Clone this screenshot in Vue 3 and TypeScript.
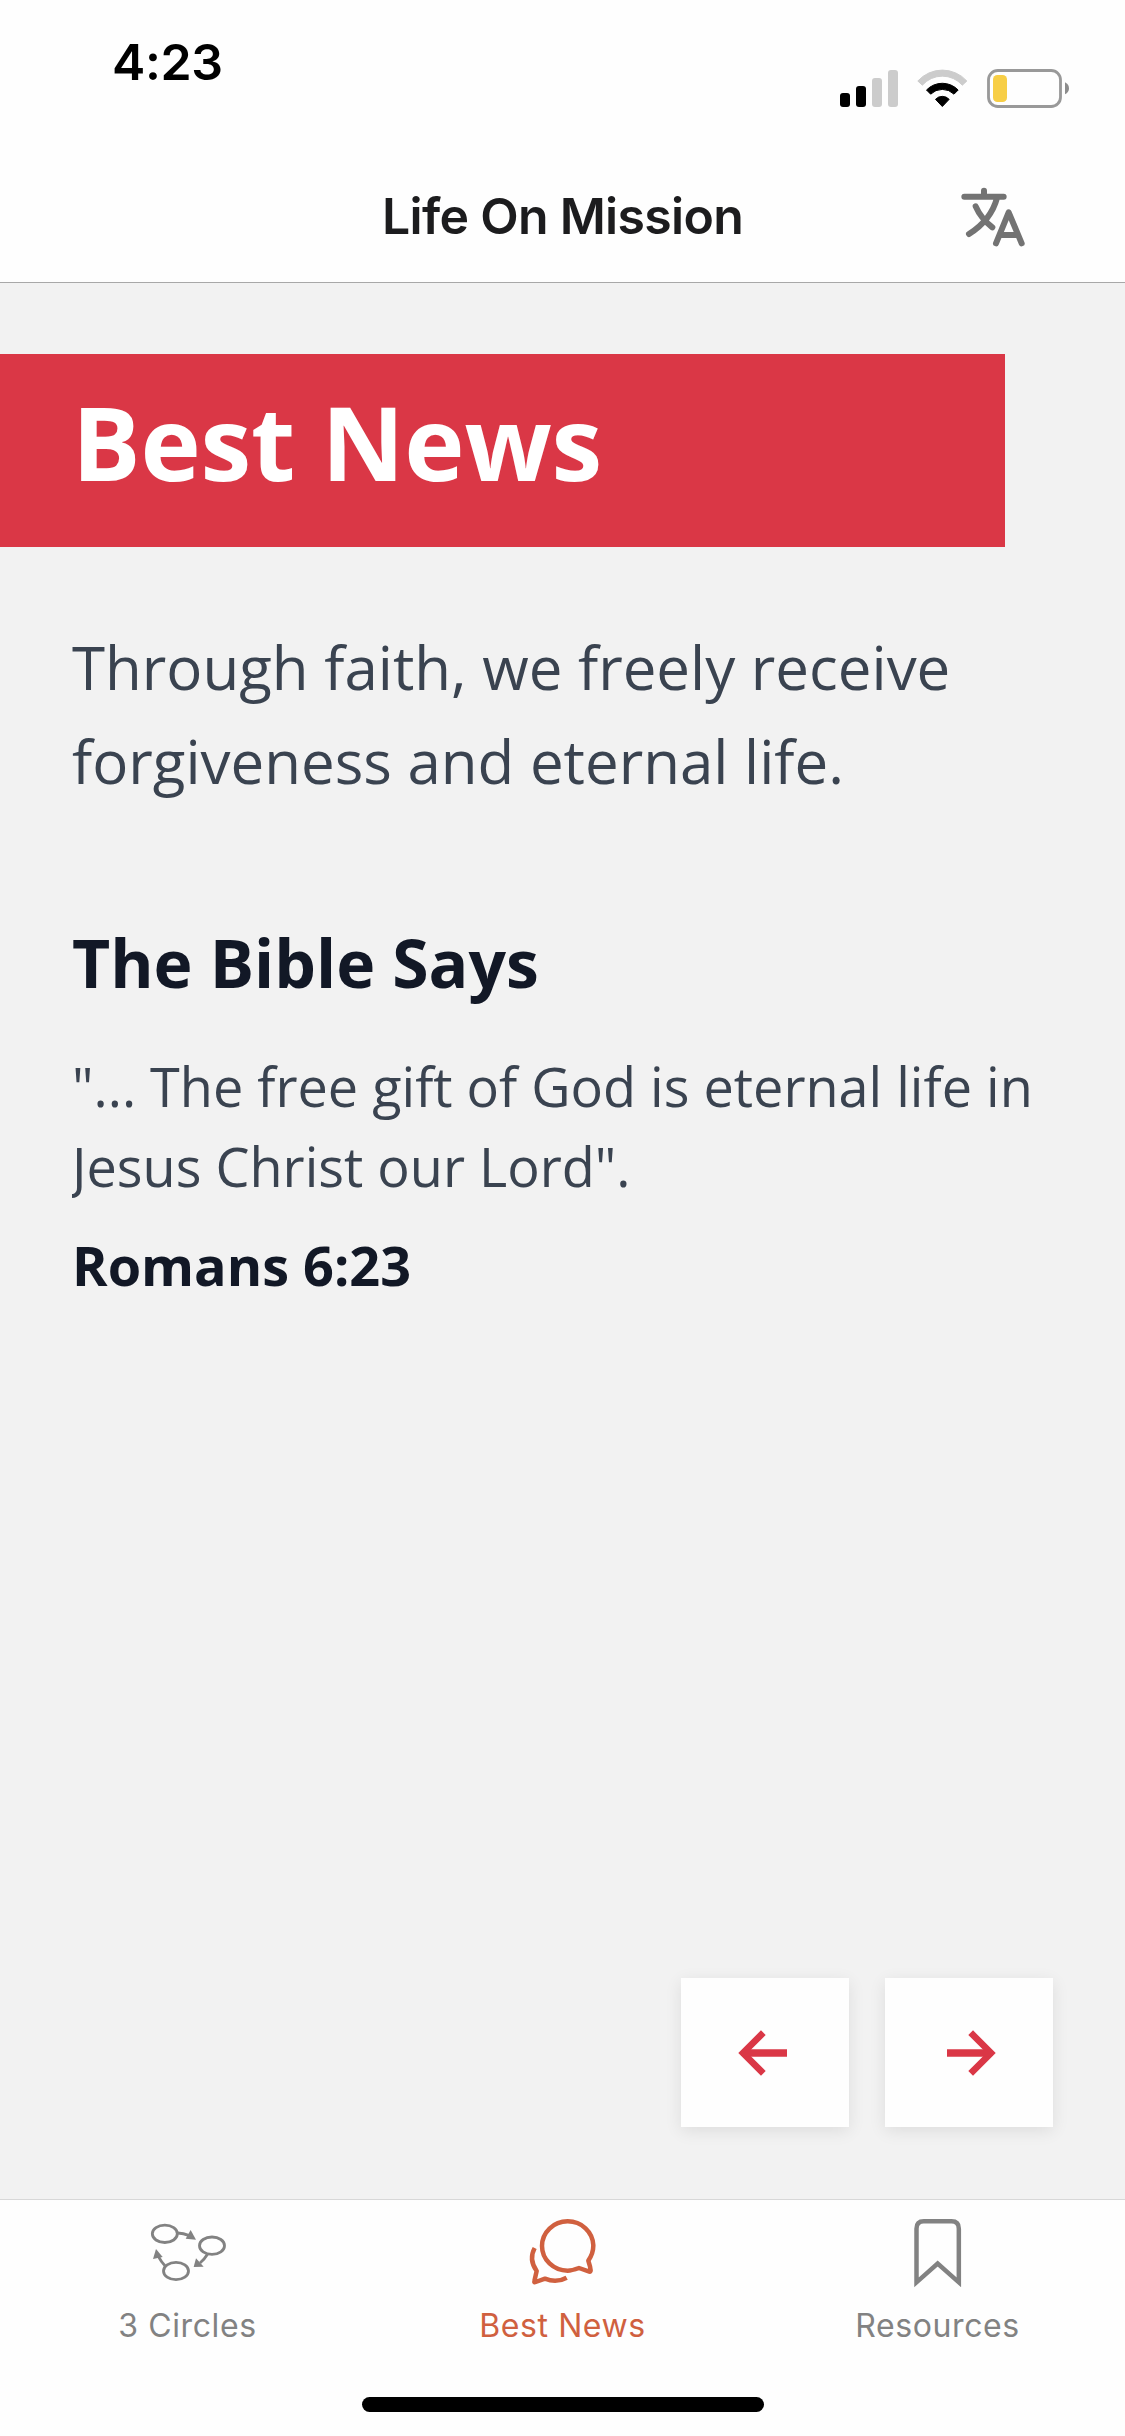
<script setup lang="ts">
import { ref } from 'vue'

interface Tab {
  id: 'circles' | 'news' | 'resources'
  label: string
}

const tabs: Tab[] = [
  { id: 'circles', label: '3 Circles' },
  { id: 'news', label: 'Best News' },
  { id: 'resources', label: 'Resources' },
]
const active = ref<Tab['id']>('news')
</script>

<template>
  <div class="screen">
    <div class="status">
      <span class="time">4:23</span>
      <div class="indicators">
        <svg width="58" height="41" viewBox="60 54 174 123">
          <rect x="60" y="129" width="30" height="42" rx="9" fill="#000" />
          <rect x="108" y="108" width="30" height="63" rx="9" fill="#000" />
          <rect x="156" y="84" width="30" height="87" rx="9" fill="#ccc" />
          <rect x="204" y="60" width="30" height="111" rx="9" fill="#ccc" />
        </svg>
        <svg class="wifi" width="53" height="41" viewBox="288 54 159 123">
          <g stroke-linejoin="round" stroke-width="3">
            <path d="M293.500 93A99 99 0 0 1 440.500 93L427 105.500A80 80 0 0 0 307 105.500Z" fill="#ccc" stroke="#ccc" />
            <path d="M319.500 120A66 66 0 0 1 414.500 120L402 132.500A50 50 0 0 0 332 132.500Z" fill="#000" stroke="#000" />
            <path d="M346.500 148A28 28 0 0 1 387.500 148L367 169.500Z" fill="#000" stroke="#000" />
          </g>
        </svg>
        <svg class="battery" width="84" height="41" viewBox="498 54 252 123">
          <rect x="505.500" y="61.500" width="216" height="108" rx="28" fill="none" stroke="#999" stroke-width="8.500" />
          <rect x="519" y="75" width="42" height="81" rx="13" fill="#f7ce46" />
          <path d="M735 97Q747 103 747 115Q747 127 735 133Z" fill="#8c8c8c" />
        </svg>
      </div>
    </div>

    <header class="nav">
      <h1>Life On Mission</h1>
      <button class="translate" aria-label="Language">
        <svg width="68" height="64" viewBox="57 45 204 192" fill="none" stroke="#737373" stroke-width="18" stroke-linecap="round" stroke-linejoin="round">
          <path d="M73 80H191M132 62V79M171 84C160 125 130 165 87 192M107 109C117 132 137 156 157 172" />
          <path d="M168 220L206 127L245 220M181 195H232" />
        </svg>
      </button>
    </header>

    <main>
      <h2 class="banner">Best News</h2>
      <div class="copy">
        <p class="lead">Through faith, we freely receive forgiveness and eternal life.</p>
        <h3>The Bible Says</h3>
        <p class="quote">"... The free gift of God is eternal life in Jesus Christ our Lord".</p>
        <p class="verse">Romans 6:23</p>
      </div>
      <div class="pager">
        <button aria-label="Previous">
          <svg width="56" height="56" viewBox="231 225 168 168" fill="none" stroke="#da3746" stroke-width="20">
            <path d="M310 248L249 309L310 370" />
            <path d="M381 309H255" stroke-width="22" />
          </svg>
        </button>
        <button aria-label="Next">
          <svg width="56" height="56" viewBox="843 225 168 168" fill="none" stroke="#da3746" stroke-width="20">
            <path d="M932 248L993 309L932 370" />
            <path d="M861 309H987" stroke-width="22" />
          </svg>
        </button>
      </div>
    </main>

    <nav class="tabs">
      <a v-for="tab in tabs" :key="tab.id" class="tab" :class="{ on: tab.id === active }" @click="active = tab.id">
        <svg v-if="tab.id === 'circles'" width="90" height="74" viewBox="129 78 270 222" fill="none" stroke="currentColor" stroke-width="8.500">
          <ellipse cx="194.500" cy="131.500" rx="37.500" ry="26" />
          <ellipse cx="336" cy="167" rx="37.500" ry="26" />
          <ellipse cx="228" cy="243" rx="37.500" ry="26" />
          <path d="M233 129Q250 129 268 137M323 192Q314 207 300 219M195 227Q184 216 175 199" />
          <g fill="currentColor" stroke="none">
            <path d="M272 120L288 149L257 146Z" />
            <path d="M288 205L281 231L311 230Z" />
            <path d="M168 177L188 201L159 207Z" />
          </g>
        </svg>
        <svg v-else-if="tab.id === 'news'" width="90" height="74" viewBox="174 78 270 222" fill="none" stroke="currentColor" stroke-width="13.500" stroke-linejoin="round">
          <path d="M385 212C395 198 400 182 400 166A77 74.500 0 0 0 323 94A77 74 0 0 0 246 168A77 74 0 0 0 323 242C335 242 346 238 357 234L388 245Q392 246 392 241C391 230 388 221 385 212Z" />
          <path d="M224 174C213 194 213 219 230 243L223 274Q222 278 227 276L255 266C277 275 300 274 320 263" />
        </svg>
        <svg v-else width="90" height="74" viewBox="158.500 78 270 222" fill="none" stroke="currentColor" stroke-width="13.500">
          <path d="M229 277V116Q229 94 251 94H334Q356 94 356 116V277L292.500 220.500Z" />
        </svg>
        <span>{{ tab.label }}</span>
      </a>
    </nav>
    <div class="home"><i></i></div>
  </div>
</template>

<style>
html,
body {
  margin: 0;
  background: #fefefe;
}
</style>

<style scoped>
.screen {
  width: 1125px;
  height: 2436px;
  display: flex;
  flex-direction: column;
  overflow: hidden;
  background: #fefefe;
  font-family: Inter, 'Liberation Sans', sans-serif;
}

h1,
h2,
h3,
p {
  margin: 0;
}

button {
  padding: 0;
  border: 0;
  background: none;
}

svg {
  display: block;
}

.status {
  height: 132px;
  display: flex;
  justify-content: space-between;
  align-items: flex-start;
  padding: 0 55px 0 112px;
  box-sizing: border-box;
}

.time {
  margin-top: 32px;
  font-size: 50px;
  line-height: 60px;
  font-weight: 600;
  letter-spacing: -0.4px;
  color: #000;
}

.indicators {
  display: flex;
  margin-top: 68px;
}

.wifi {
  margin-left: 18px;
}

.battery {
  margin-left: 17px;
}

.nav {
  height: 150px;
  display: grid;
  grid-template-columns: 1fr auto 1fr;
  align-items: start;
  border-bottom: 1px solid #a8a8a8;
}

.nav h1 {
  grid-column: 2;
  margin-top: 54px;
  font-size: 50px;
  line-height: 60px;
  font-weight: 600;
  letter-spacing: -0.7px;
  color: #1c1c1e;
}

.translate {
  justify-self: end;
  margin: 53px 98px 0 0;
}

main {
  flex: 1;
  display: flex;
  flex-direction: column;
  padding-top: 71px;
  background: #f2f2f2;
  font-family: 'Open Sans', sans-serif;
}

.banner {
  width: 1005px;
  height: 193px;
  box-sizing: border-box;
  padding: 18px 0 0 72px;
  background: #da3746;
  color: #fff;
  font-size: 102px;
  line-height: 139px;
  font-weight: 700;
  letter-spacing: -0.15px;
}

.copy {
  padding: 73px 72px 0;
}

.lead {
  font-size: 60px;
  line-height: 94px;
  color: #3a4350;
}

h3 {
  margin-top: 109px;
  font-size: 66px;
  line-height: 90px;
  font-weight: 700;
  color: #121826;
}

.quote {
  margin-top: 39px;
  font-size: 54px;
  line-height: 80px;
  color: #3a4350;
  overflow: hidden;
}

.verse {
  margin-top: 19px;
  font-size: 54px;
  line-height: 80px;
  font-weight: 700;
  color: #121826;
}

.pager {
  margin-top: auto;
  padding: 0 72px 72px 0;
  display: flex;
  justify-content: flex-end;
  gap: 36px;
}

.pager button {
  width: 168px;
  height: 149px;
  display: flex;
  align-items: center;
  justify-content: center;
  padding-top: 1px;
  box-sizing: border-box;
  background: #fefefe;
  box-shadow: 0 4px 16px rgba(0, 0, 0, 0.09);
}

.tabs {
  height: 182px;
  display: flex;
  border-top: 1px solid #d8d8d8;
}

.tab {
  flex: 1;
  display: flex;
  flex-direction: column;
  align-items: center;
  padding-top: 16px;
  color: #828282;
}

.tab.on {
  color: #d0603f;
}

.tab span {
  margin-top: 16px;
  font-size: 32px;
  line-height: 40px;
  letter-spacing: 0.6px;
}

.home {
  height: 54px;
  display: flex;
  justify-content: center;
}

.home i {
  width: 402px;
  height: 15px;
  margin-top: 15px;
  border-radius: 8px;
  background: #000;
}
</style>
